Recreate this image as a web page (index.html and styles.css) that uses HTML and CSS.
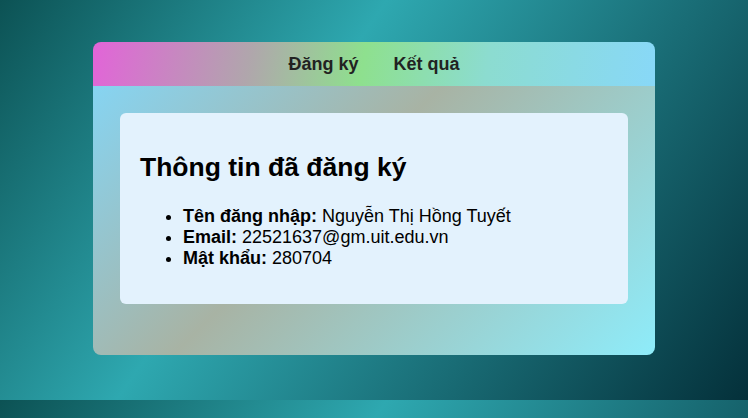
FILE: index.html
```html
<!DOCTYPE html>
<html lang="vi">
<head>
<meta charset="utf-8">
<title>Thông tin đã đăng ký</title>
<link rel="stylesheet" href="styles.css">
</head>
<body>
  <div class="container">
    <nav class="nav">
      <a class="nav-link" href="#">Đăng ký</a>
      <a class="nav-link" href="#">Kết quả</a>
    </nav>
    <main class="content">
      <section class="card">
        <h2 class="card-title">Thông tin đã đăng ký</h2>
        <ul class="info-list">
          <li><strong>Tên đăng nhập:</strong> Nguyễn Thị Hồng Tuyết</li>
          <li><strong>Email:</strong> 22521637@gm.uit.edu.vn</li>
          <li><strong>Mật khẩu:</strong> 280704</li>
        </ul>
      </section>
    </main>
  </div>
</body>
</html>
```

FILE: styles.css
```css
html {
  background: linear-gradient(124deg, #0c5254 0%, #2ea8b0 38%, #04303a 100%);
  background-size: 100% 400px;
  background-repeat: repeat;
}

body {
  margin: 0;
  font-family: "Liberation Sans", Arial, sans-serif;
  font-size: 18px;
  color: #000;
}

.container {
  width: 562px;
  margin: 42px auto 0;
  border-radius: 8px;
  overflow: hidden;
}

.nav {
  height: 44px;
  display: flex;
  justify-content: center;
  align-items: center;
  gap: 35px;
  background: linear-gradient(100deg, #e264d8 0%, #b0a6ac 28%, #8ee08e 48%, #8cdcd0 70%, #88d8f8 100%);
}

.nav-link {
  color: #222;
  text-decoration: none;
  font-weight: bold;
  font-size: 18px;
}

.content {
  padding: 27px 27px 51px;
  background: linear-gradient(135deg, #86d4f2 0%, #a8b3a4 42%, #8eecfa 100%);
}

.card {
  background: #e3f2fd;
  border-radius: 6px;
  padding: 16px 20px 19px;
}

.card-title {
  font-size: 26.5px;
  font-weight: bold;
  margin: 23px 0 23px;
}

.info-list {
  margin: 0 0 16px;
  padding-left: 43px;
}
```
